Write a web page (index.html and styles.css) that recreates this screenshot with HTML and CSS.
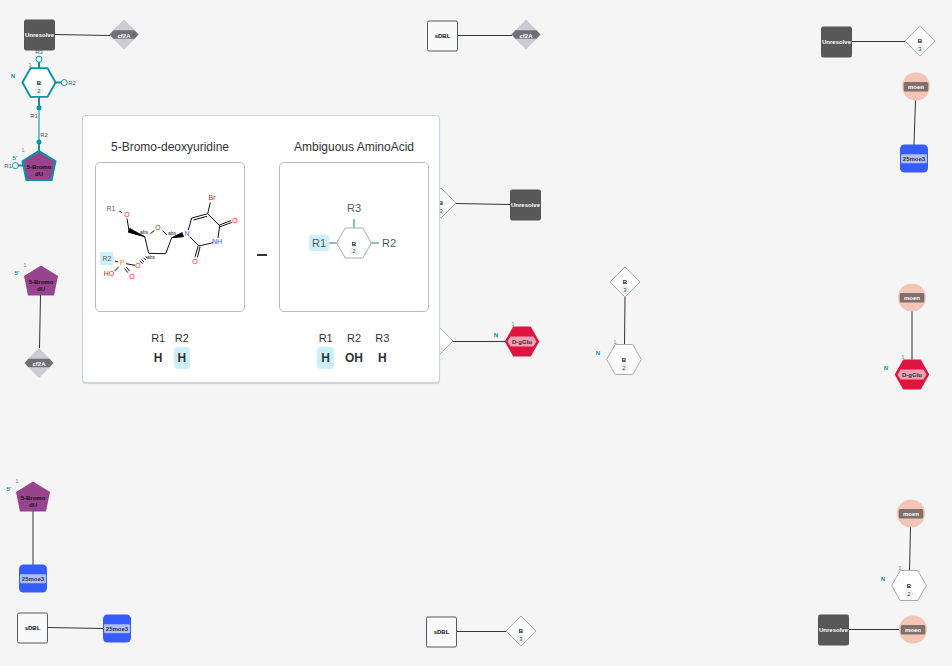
FILE: index.html
```html
<!DOCTYPE html>
<html lang="en">
<head>
<meta charset="utf-8">
<title>Macromolecules canvas</title>
<link rel="stylesheet" href="styles.css">
</head>
<body>
<main class="editor">
<svg class="canvas" aria-label="Monomer canvas">
  <defs>
    <rect id="chem-square" x="-15" y="-15" width="30" height="30" rx="1.5"/>
    <path id="diamond" d="M0-15 15 0 0 15-15 0Z"/>
    <path id="diamond-band" d="M-14.3 0-10.5-4.2H10.5L14.3 0 10.5 4.2H-10.5Z"/>
    <path id="hexagon" d="M-17.3 0-8.8-15H8.8L17.3 0 8.8 15H-8.8Z"/>
    <path id="hexagon-band" d="M-14.5 0-11.5-5H11.5L14.5 0 11.5 5H-11.5Z"/>
    <path id="pentagon" d="M0-15.5 17-5 13 14.5H-13L-17-5Z"/>
    <circle id="phosphate" r="14"/>
    <rect id="phosphate-band" x="-12.3" y="-4.5" width="24.6" height="9.5" rx="1.5"/>
    <rect id="block" x="-14" y="-14" width="28" height="28" rx="4.5"/>
    <rect id="block-band" x="-13" y="-4.2" width="26" height="9" rx="1"/>
  </defs>

  <g class="bonds">
    <path d="M55 34.5 110 35.5M458 35.5H512M852 41.5H905M915.5 100 914 145M456 203.5 510 204.5M453 341.5H505M625 297 624.5 345M912 311V360M40.5 295 39.5 348M33 511V565M48 627.5 103 628.5M457 631.5H506M910.5 527 909.5 571M849 629.5H899"/>
  </g>

  <g transform="translate(39.5 35)"><use href="#chem-square" class="unresolved"/><text class="light" y="2">Unresolve</text></g>
  <g transform="translate(124 34.5)"><use href="#diamond" class="cf-shape"/><use href="#diamond-band" class="cf-band"/><text class="light" y="3">cf2A</text></g>

  <g transform="translate(442.5 36)"><use href="#chem-square" class="chem"/><text y="2">sDBL</text></g>
  <g transform="translate(526 34.5)"><use href="#diamond" class="cf-shape"/><use href="#diamond-band" class="cf-band"/><text class="light" y="3">cf2A</text></g>

  <g transform="translate(836.5 42)"><use href="#chem-square" class="unresolved"/><text class="light" y="2">Unresolve</text></g>
  <g transform="translate(920 41)"><use href="#diamond" class="ambiguous"/><text y="2">B</text><circle class="count" cy="8" r="3.5"/><text class="number" y="10">3</text></g>

  <g transform="translate(916 86.5)"><use href="#phosphate" class="moen"/><use href="#phosphate-band" class="moen-band"/><text class="light" y="2">moen</text></g>
  <g transform="translate(914 158.5)"><use href="#block" class="nucleotide"/><use href="#block-band" class="nucleotide-band"/><text class="soft" y="2">25moe3</text></g>

  <g transform="translate(441 203)"><use href="#diamond" class="ambiguous"/><text y="2">B</text><circle class="count" cy="8" r="3.5"/><text class="number" y="10">3</text></g>
  <g transform="translate(525.5 205)"><use href="#chem-square" class="unresolved"/><text class="light" y="2">Unresolve</text></g>

  <g transform="translate(438 341)"><use href="#diamond" class="ambiguous"/><circle class="count" cy="8" r="3.5"/></g>
  <g transform="translate(522 341.5)"><use href="#hexagon" class="peptide"/><use href="#hexagon-band" class="peptide-band"/><text class="soft" y="2">D-gGlu</text><text class="index" x="-9" y="-16">1</text><text class="terminal" x="-26" y="-5">N</text></g>

  <g transform="translate(625 282)"><use href="#diamond" class="ambiguous"/><text y="2">B</text><circle class="count" cy="8" r="3.5"/><text class="number" y="10">3</text></g>
  <g transform="translate(624 359.5)"><use href="#hexagon" class="ambiguous"/><text y="2">B</text><circle class="count" cy="8" r="3.5"/><text class="number" y="10">2</text><text class="index" x="-9" y="-16">1</text><text class="terminal" x="-26" y="-5">N</text></g>

  <g transform="translate(912 297.5)"><use href="#phosphate" class="moen"/><use href="#phosphate-band" class="moen-band"/><text class="light" y="2">moen</text></g>
  <g transform="translate(912 374.5)"><use href="#hexagon" class="peptide"/><use href="#hexagon-band" class="peptide-band"/><text class="soft" y="2">D-gGlu</text><text class="index" x="-9" y="-16">1</text><text class="terminal" x="-26" y="-5">N</text></g>

  <g transform="translate(41 281)"><use href="#pentagon" class="base"/><text y="3">5-Bromo</text><text y="10">dU</text><text class="index" x="-16" y="-14">1</text><text class="terminal" x="-24" y="-6">5’</text></g>
  <g transform="translate(39 363)"><use href="#diamond" class="cf-shape"/><use href="#diamond-band" class="cf-band"/><text class="light" y="3">cf2A</text></g>

  <g transform="translate(33 497)"><use href="#pentagon" class="base"/><text y="3">5-Bromo</text><text y="10">dU</text><text class="index" x="-16" y="-14">1</text><text class="terminal" x="-24" y="-6">5’</text></g>
  <g transform="translate(33 578.5)"><use href="#block" class="nucleotide"/><use href="#block-band" class="nucleotide-band"/><text class="soft" y="2">25moe3</text></g>

  <g transform="translate(32.5 628)"><use href="#chem-square" class="chem"/><text y="2">sDBL</text></g>
  <g transform="translate(117 628.5)"><use href="#block" class="nucleotide"/><use href="#block-band" class="nucleotide-band"/><text class="soft" y="2">25moe3</text></g>

  <g transform="translate(441.5 632)"><use href="#chem-square" class="chem"/><text y="2">sDBL</text></g>
  <g transform="translate(521 631)"><use href="#diamond" class="ambiguous"/><text y="2">B</text><circle class="count" cy="8" r="3.5"/><text class="number" y="10">3</text></g>

  <g transform="translate(911 513.5)"><use href="#phosphate" class="moen"/><use href="#phosphate-band" class="moen-band"/><text class="light" y="2">moen</text></g>
  <g transform="translate(909 585.5)"><use href="#hexagon" class="ambiguous"/><text y="2">B</text><circle class="count" cy="8" r="3.5"/><text class="number" y="10">2</text><text class="index" x="-9" y="-16">1</text><text class="terminal" x="-26" y="-5">N</text></g>

  <g transform="translate(833.5 630)"><use href="#chem-square" class="unresolved"/><text class="light" y="2">Unresolve</text></g>
  <g transform="translate(913 629.5)"><use href="#phosphate" class="moen"/><use href="#phosphate-band" class="moen-band"/><text class="light" y="2">moen</text></g>

  <!-- Hovered bond with its attachment points -->
  <path class="bond-hover" d="M39 108V142"/>
  <path class="arm" d="M39 62V68M56 82.5H61M39 97V108M39 142V151M18 165.5H23"/>
  <g transform="translate(39 82.5)"><use href="#hexagon" class="ambiguous selected" transform="scale(.96)"/><text y="2">B</text><circle class="count" cy="8" r="3.5"/><text class="number" y="10">2</text><text class="index" x="-9" y="-16">1</text><text class="terminal" x="-26" y="-5">N</text></g>
  <g transform="translate(39 166)"><use href="#pentagon" class="base selected" transform="scale(.97)"/><text y="3">5-Bromo</text><text y="10">dU</text><text class="index" x="-16" y="-14">1</text><text class="terminal" x="-24" y="-6">5’</text></g>
  <g class="open-point"><circle cx="39" cy="59.2" r="3"/><circle cx="64.3" cy="82.6" r="3"/><circle cx="15.4" cy="165.6" r="3"/></g>
  <g class="used-point"><circle cx="39" cy="107.7" r="2.5"/><circle cx="39" cy="142" r="2.5"/></g>
  <g class="point-label"><text x="39" y="54">R3</text><text x="72" y="85">R2</text><text x="34" y="118">R1</text><text x="44" y="137">R2</text><text x="8" y="168">R1</text></g>
</svg>

<section class="preview" role="tooltip" aria-label="Bond preview">
  <article class="monomer">
    <h2 class="monomer-name">5-Bromo-deoxyuridine</h2>
    <div class="structure">
      <svg class="molecule" viewBox="0 0 148 148" aria-label="5-Bromo-deoxyuridine structure">
        <rect class="highlight" x="4" y="89" width="13" height="13" rx="1"/>
        <g class="chem-bonds">
          <path d="M23.3 48.3 26 49.5M31 55.5 33 67.7M54.5 70.5 58.5 67.5M66.5 67.7 71 72M75.7 74.7 69.7 90.7 52.7 90.3 48.7 73.7M92.3 67 95.7 55 111.7 50.7 123.7 62.7 122 75M97.5 57 111 53.3M111.7 50.7 114.3 39.5M123.4 62 135.2 57.5M124 63.7 135.8 59.5M117 79.7 103 83 93.7 73.7M102.2 83 99 93.8M104 84 101.4 94.4M39 102.3 30 100.7M19 98 22 99M18.7 108 22.7 103.8M28.5 105.5 31.8 109.6M30.3 104 33.6 108.2"/>
          <path d="M49.5 93.5 51.5 95M47.5 95 50 97M45.5 96.7 48 98.8M43.8 98 46.7 100.6"/>
          <path class="wedge" d="M48.7 73.7 33.7 65.5 32.3 69.2ZM75.7 74.7 86.2 69.7 87.4 73.7Z"/>
        </g>
        <g class="atoms">
          <text class="group" x="15" y="48">R1</text><text class="group" x="11" y="98">R2</text>
          <text class="oxygen" x="31" y="54">O</text><text class="oxygen" x="62" y="67">O</text><text class="oxygen" x="42" y="105">O</text><text class="oxygen" x="36" y="116">O</text><text class="oxygen" x="139" y="60">O</text><text class="oxygen" x="99" y="101">O</text><text class="oxygen" x="13" y="113">HO</text>
          <text class="nitrogen" x="91" y="73">N</text><text class="nitrogen" x="121" y="81">NH</text>
          <text class="bromine" x="116" y="37">Br</text><text class="phosphorus" x="26" y="102">P</text>
          <text class="stereo" x="48" y="71">abs</text><text class="stereo" x="76" y="72">abs</text><text class="stereo" x="55" y="96">abs</text>
        </g>
      </svg>
    </div>
    <dl class="leaving-groups">
      <div class="leaving-group"><dt>R1</dt><dd>H</dd></div>
      <div class="leaving-group"><dt>R2</dt><dd class="active">H</dd></div>
    </dl>
  </article>
  <span class="connector"></span>
  <article class="monomer">
    <h2 class="monomer-name">Ambiguous AminoAcid</h2>
    <div class="structure">
      <svg class="molecule" viewBox="0 0 148 148" aria-label="Ambiguous AminoAcid structure">
        <rect class="highlight" x="29" y="72" width="20" height="16" rx="3"/>
        <path class="stub" d="M74 56V65M49 80H57M91 80H99"/>
        <g class="canvas-monomer" transform="translate(74 80)"><use href="#hexagon" class="ambiguous"/><text y="3">B</text><circle class="count" cy="8" r="3.5"/><text class="number" y="10">2</text></g>
        <g class="r-label"><text x="74" y="49">R3</text><text x="39" y="84">R1</text><text x="109" y="84">R2</text></g>
      </svg>
    </div>
    <dl class="leaving-groups">
      <div class="leaving-group"><dt>R1</dt><dd class="active">H</dd></div>
      <div class="leaving-group"><dt>R2</dt><dd>OH</dd></div>
      <div class="leaving-group"><dt>R3</dt><dd>H</dd></div>
    </dl>
  </article>
</section>
</main>
</body>
</html>
```

FILE: styles.css
```css
* { box-sizing: border-box; }

body {
  margin: 0;
  background: #f5f5f5;
  color: #333;
  font-family: "Liberation Sans", Arial, sans-serif;
}

.editor { position: relative; min-height: 100vh; overflow: hidden; }

.canvas { position: absolute; inset: 0; width: 100%; height: 100%; }

.canvas text, .canvas-monomer text {
  fill: #111;
  font-size: 6px;
  font-weight: 700;
  text-anchor: middle;
}
.canvas .light { fill: #fff; }
.canvas .soft { fill: #333; }
.canvas .number, .canvas-monomer .number { fill: #333; font-weight: 400; }
.canvas .index { fill: #888; font-weight: 400; }
.canvas .terminal { fill: #0097a8; }
.canvas .point-label text { fill: #585858; font-weight: 400; }

.bonds { fill: none; stroke: #333; stroke-width: 1; }
.bond-hover { stroke: #6cc4ce; stroke-width: 2; }
.arm { fill: none; stroke: #0097a8; stroke-width: 2; }
.open-point { fill: #fff; stroke: #0097a8; stroke-width: 1; }
.used-point { fill: #0097a8; }

.unresolved { fill: #585858; stroke: #555; stroke-width: 1; }
.chem { fill: #f8f9fb; stroke: #585858; stroke-width: 1; }
.cf-shape { fill: #cdcad6; }
.cf-band { fill: #706f74; }
.ambiguous { fill: #fff; stroke: #aaa; stroke-width: 1; }
.count { fill: #fff; stroke: #cdebf0; stroke-width: 1; }
.moen { fill: #f4c5b7; }
.moen-band { fill: #80706b; }
.nucleotide { fill: #365cff; }
.nucleotide-band { fill: #aebdff; }
.peptide { fill: #df1540; }
.peptide-band { fill: #f0a1b3; }
.base { fill: #98438d; }
.selected { stroke: #0097a8; stroke-width: 2; }

.preview {
  position: absolute;
  top: 115px;
  left: 82px;
  display: flex;
  padding: 24px 10px 13px 12px;
  background: #fff;
  border: 1px solid #cad3dd;
  border-radius: 4px;
  box-shadow: 0 1px 1px #cad3dd;
}
.monomer { display: flex; flex-direction: column; align-items: center; }
.monomer-name {
  margin: 0 0 7px;
  font-size: 12px;
  font-weight: 400;
  line-height: 15px;
}
.structure {
  width: 150px;
  height: 150px;
  border: 1px solid #b4b9d6;
  border-radius: 5px;
}
.molecule { display: block; width: 100%; height: 100%; }
.connector {
  align-self: center;
  width: 10px;
  height: 2px;
  margin: 0 12px;
  background: #333;
}

.leaving-groups { display: flex; gap: 7px; margin: 19px 0 0; }
.leaving-group { display: flex; flex-direction: column; align-items: center; gap: 1px; }
.leaving-group dt { font-size: 11px; line-height: 15px; }
.leaving-group dd {
  margin: 0;
  padding: 0 4px;
  border-radius: 4px;
  font-size: 12px;
  font-weight: 700;
  line-height: 22px;
}
.leaving-group .active { background: #cdeffb; }

.highlight { fill: #cdeffb; }
.chem-bonds { fill: none; stroke: #111; stroke-width: 1; }
.chem-bonds .wedge { fill: #000; stroke: #000; }
.atoms text { font-size: 7px; text-anchor: middle; }
.atoms .group { fill: #666; }
.atoms .oxygen { fill: #ff0d0d; }
.atoms .nitrogen { fill: #304ff7; }
.atoms .bromine { fill: #a62929; }
.atoms .phosphorus { fill: #ff8000; }
.atoms .stereo { fill: #222; font-size: 5px; }
.stub { stroke: #8dbcc4; stroke-width: 2; }
.r-label { fill: #585858; font-size: 11px; text-anchor: middle; }
```
